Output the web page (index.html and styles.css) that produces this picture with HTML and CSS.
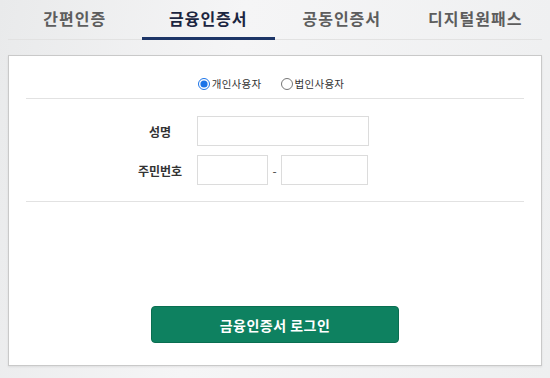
FILE: index.html
```html
<!DOCTYPE html>
<html>
<head>
    <title>금융인증서 로그인</title>
    <meta name="viewport" content="width=device-width, initial-scale=1.0">
    <link rel="stylesheet" href="styles.css">
</head>
<body>
    <div class="tabs">
        <div class="tab">간편인증</div>
        <div class="tab active">금융인증서</div>
        <div class="tab">공동인증서</div>
        <div class="tab">디지털원패스</div>
    </div>

    <div class="card">
        <div class="user-type">
            <label class="radio"><input type="radio" name="userType" checked> 개인사용자</label>
            <label class="radio"><input type="radio" name="userType"> 법인사용자</label>
        </div>

        <div class="form">
            <div class="form-row">
                <span class="form-label">성명</span>
                <input type="text" class="field field-name">
            </div>
            <div class="form-row">
                <span class="form-label">주민번호</span>
                <input type="text" class="field field-front">
                <span class="dash">-</span>
                <input type="password" class="field field-back">
            </div>
        </div>

        <div class="actions">
            <button class="login-btn">금융인증서 로그인</button>
        </div>
    </div>
</body>
</html>
```

FILE: styles.css
```css
:root {
    --bg-color: #eeeff0;
    --navy: #1d3567;
    --green: #0e8160;
    --line: #e2e2e2;
}
body {
    font-family: "Noto Sans CJK KR", "Noto Sans", sans-serif;
    background: linear-gradient(100deg, #e9eaeb 0%, #f5f5f6 40%, #eeeff0 100%);
    margin: 0;
    width: 550px;
    height: 378px;
    overflow: hidden;
}
.tabs {
    display: flex;
    margin: 0 8px;
    border-bottom: 1px solid var(--line);
}
.tab {
    flex: 1;
    text-align: center;
    font-size: 16px;
    font-weight: 600;
    letter-spacing: 1px;
    color: #5d5d5d;
    height: 37px;
    line-height: 36px;
    border-bottom: 3px solid transparent;
    margin-bottom: -1px;
}
.tab.active {
    color: #1b2540;
    font-weight: 700;
    border-bottom-color: var(--navy);
}
.card {
    margin: 15px 8px 0;
    background-color: #fff;
    border: 1px solid #c9c9c9;
    padding: 0 17px;
    box-shadow: 0 1px 2px rgba(0, 0, 0, 0.08);
}
.user-type {
    display: flex;
    justify-content: center;
    gap: 19px;
    padding: 19px 8px 5px 0;
    border-bottom: 1px solid var(--line);
    font-size: 10.5px;
    letter-spacing: 0.3px;
    color: #333;
    line-height: 18px;
}
.radio {
    display: flex;
    align-items: center;
    gap: 2px;
}
.radio input {
    margin: 0;
    width: 12px;
    height: 12px;
    accent-color: #1a73e8;
}
.form {
    padding: 17px 0 16px 99px;
    border-bottom: 1px solid var(--line);
    display: flex;
    flex-direction: column;
    gap: 9px;
}
.form-row {
    display: flex;
    align-items: center;
}
.form-label {
    width: 70px;
    margin-right: 2px;
    text-align: center;
    font-size: 12px;
    font-weight: 700;
    color: #333;
}
.field {
    box-sizing: border-box;
    height: 30px;
    border: 1px solid #dcdcdc;
    background: #fff;
    padding: 0 6px;
    margin: 0;
}
.field-name {
    width: 172px;
}
.field-front {
    width: 71px;
}
.field-back {
    width: 87px;
}
.dash {
    width: 13px;
    text-align: center;
    font-size: 12px;
    color: #444;
}
.actions {
    display: flex;
    justify-content: center;
    padding: 104px 0 22px;
}
.login-btn {
    width: 248px;
    height: 37px;
    background-color: var(--green);
    border: 1px solid #0a6e51;
    border-radius: 4px;
    color: #fff;
    font-family: inherit;
    font-size: 14px;
    font-weight: 700;
    letter-spacing: 0.5px;
    cursor: pointer;
}
.login-btn:hover {
    opacity: 0.9;
}
```
